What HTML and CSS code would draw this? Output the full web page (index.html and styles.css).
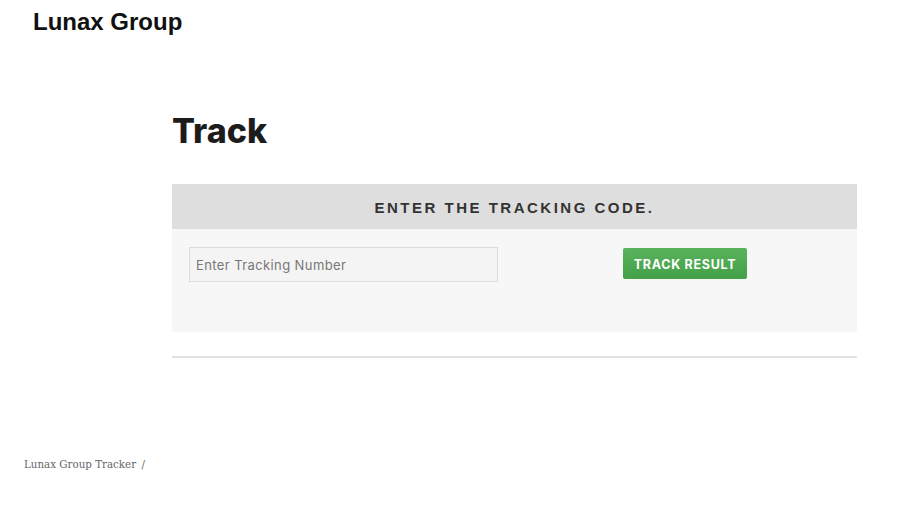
FILE: index.html
```html
<!DOCTYPE html>
<html lang="en">
<head>
    <meta charset="UTF-8">
    <meta name="viewport" content="width=device-width, initial-scale=1.0">
    <title>Track - Lunax Group</title>
    <link rel="stylesheet" href="styles.css">
</head>
<body>
    <header class="site-header">
        <div class="site-title">Lunax Group</div>
    </header>

    <main class="content">
        <h1 class="page-title">Track</h1>

        <section class="track-panel">
            <div class="track-panel-head">Enter the tracking code.</div>
            <form class="track-form" id="track-form">
                <input type="text" class="track-input" placeholder="Enter Tracking Number" />
                <button type="submit" class="track-button">Track Result</button>
            </form>
        </section>

        <hr class="divider">
    </main>

    <footer class="site-footer">
        <span>Lunax Group Tracker</span>
        <span class="sep">/</span>
    </footer>
</body>
</html>
```

FILE: styles.css
```css
/* Base */
body {
    margin: 0;
    padding: 0;
    background: #ffffff;
    color: #222;
    font-family: "Liberation Sans", Arial, sans-serif;
}

/* Site header */
.site-header {
    padding: 7px 33px 0;
}

.site-title {
    font-family: "Liberation Sans", Arial, sans-serif;
    font-weight: bold;
    font-size: 24px;
    line-height: 30px;
    color: #111;
}

/* Main content */
.content {
    padding: 0 43px 0 172px;
}

.page-title {
    margin: 72px 0 0;
    font-family: Inter, "Open Sans", sans-serif;
    font-weight: 800;
    font-size: 34px;
    line-height: 44px;
    color: #1c1c1c;
}

/* Tracking panel */
.track-panel {
    margin-top: 31px;
    background: #f7f7f7;
}

.track-panel-head {
    height: 45px;
    line-height: 47px;
    background: #dedede;
    text-align: center;
    text-transform: uppercase;
    font-family: "Liberation Sans", Arial, sans-serif;
    font-weight: bold;
    font-size: 15px;
    letter-spacing: 2.5px;
    color: #333;
}

.track-form {
    display: flex;
    align-items: flex-start;
    height: 103px;
    padding: 18px 17px 0;
    box-sizing: border-box;
}

.track-input {
    width: 309px;
    height: 35px;
    box-sizing: border-box;
    padding: 0 6px;
    border: 1px solid #dcdcdc;
    background: #f4f4f4;
    font-family: Inter, "Open Sans", sans-serif;
    font-size: 13px;
    letter-spacing: 0.4px;
    color: #555;
    outline: none;
}

.track-input::placeholder {
    color: #777;
}

.track-button {
    margin: 1px 0 0 125px;
    width: 124px;
    height: 31px;
    padding: 2px 0 0;
    border: none;
    border-radius: 2px;
    background: linear-gradient(to bottom, #59b35c, #43a047);
    color: #fff;
    font-family: Inter, "Open Sans", sans-serif;
    font-weight: 700;
    font-size: 12.5px;
    letter-spacing: 0.7px;
    text-transform: uppercase;
    cursor: pointer;
}

.divider {
    margin: 24px 0 0;
    border: none;
    border-top: 2px solid #e2e2e2;
}

/* Footer */
.site-footer {
    padding: 100px 24px 0;
    font-family: "DejaVu Serif", Georgia, serif;
    font-size: 10.3px;
    color: #666;
}

.site-footer .sep {
    margin-left: 2px;
}
```
